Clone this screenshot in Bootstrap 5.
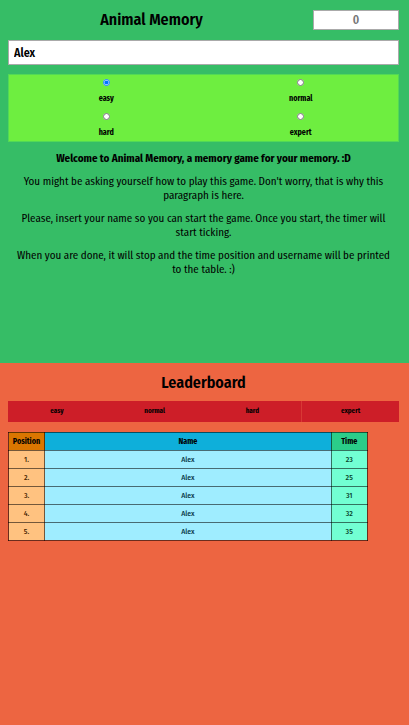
<!DOCTYPE html>
<html lang="en">
<head>
<meta charset="utf-8">
<meta name="viewport" content="width=device-width, initial-scale=1">
<title>Animal Memory</title>
<link href="https://cdn.jsdelivr.net/npm/bootstrap@5.3.0/dist/css/bootstrap.min.css" rel="stylesheet">
<style>
body { font-family: "Fira Sans Condensed", "Roboto Condensed", "Open Sans Condensed", Lato, sans-serif; font-size: 11px; line-height: 14px; color: #000; }
.game { background: #36bd66; padding: 10px 10px 10px 8px; flex: 1 1 0; }
.scores { background: #ed6541; padding: 10px 10px 10px 8px; flex: 1 1 0; }
.title { font-size: 16px; line-height: 20px; font-weight: 600; }
.timer { width: 22%; height: 20px; margin-left: 18px; font-size: 12px; line-height: 16px; font-weight: 600; }
.field { border: 1px solid #aaa; border-radius: 0; background: #fff; color: #000; }
.timer:disabled { color: #777; background: #fff; }
.player { height: 25px; font-size: 12px; font-weight: 600; padding: 0 5px; margin: 10px 0 9px; }
.levels { background: #6eee40; border: 1px solid #52d955; font-size: 8px; font-weight: 700; padding: 4px 0 0; row-gap: 6px; margin-bottom: 10px; }
.levels input { width: 7px; height: 7px; margin: 0 0 8px; }
.levels label { line-height: 10px; }
.level { height: 28px; }
.intro { gap: 9px; padding: 0 4px; }
.tabs { background: #cd1e28; margin: 8px 0 10px; }
.tab { height: 21px; font-size: 7px; line-height: 20px; font-weight: 700; background: #cd1e28; border: 0; color: #000; padding: 0; }
.tab:last-child { border-left: 1px solid #d83935; }
.ranks { width: 92%; font-size: 8px; line-height: 17px; border-collapse: collapse; table-layout: fixed; }
.ranks th, .ranks td { border: 1px solid rgba(0, 0, 0, .55); padding: 0; height: 18px; }
.ranks th { font-weight: 700; }
.ranks td { font-family: "Fira Sans", "Fira Sans Condensed", Lato, sans-serif; font-size: 7px; font-weight: 500; }
.ranks col.edge { width: 36px; }
.ranks th:nth-child(1) { background: #da7600; }
.ranks th:nth-child(2) { background: #0eafda; }
.ranks th:nth-child(3) { background: #2bcd89; }
.ranks td:nth-child(1) { background: #ffc280; color: #442200; }
.ranks td:nth-child(2) { background: #9fedff; color: #083848; }
.ranks td:nth-child(3) { background: #72ffd3; color: #064028; }
</style>
<script src="https://cdn.jsdelivr.net/npm/bootstrap@5.3.0/dist/js/bootstrap.bundle.min.js"></script>
</head>
<body>
<main class="d-flex flex-column min-vh-100">
  <section class="game text-center">
    <header class="d-flex align-items-center">
      <h1 class="title flex-grow-1 m-0">Animal Memory</h1>
      <input class="timer field text-center" type="text" aria-label="Timer" value="0" disabled>
    </header>
    <input class="player field w-100 d-block" type="text" aria-label="Name" value="Alex">
    <div class="levels row g-0" role="radiogroup" aria-label="Difficulty">
      <div class="level col-6 d-flex flex-column align-items-center"><input type="radio" name="level" id="easy" checked><label for="easy">easy</label></div>
      <div class="level col-6 d-flex flex-column align-items-center"><input type="radio" name="level" id="normal"><label for="normal">normal</label></div>
      <div class="level col-6 d-flex flex-column align-items-center"><input type="radio" name="level" id="hard"><label for="hard">hard</label></div>
      <div class="level col-6 d-flex flex-column align-items-center"><input type="radio" name="level" id="expert"><label for="expert">expert</label></div>
    </div>
    <div class="intro d-flex flex-column">
      <p class="m-0 fw-bold">Welcome to Animal Memory, a memory game for your memory. :D</p>
      <p class="m-0">You might be asking yourself how to play this game. Don't worry, that is why this paragraph is here.</p>
      <p class="m-0">Please, insert your name so you can start the game. Once you start, the timer will start ticking.</p>
      <p class="m-0">When you are done, it will stop and the time position and username will be printed to the table. :)</p>
    </div>
  </section>
  <section class="scores text-center">
    <h2 class="title m-0">Leaderboard</h2>
    <div class="tabs d-flex">
      <button class="tab col-3" type="button">easy</button>
      <button class="tab col-3" type="button">normal</button>
      <button class="tab col-3" type="button">hard</button>
      <button class="tab col-3" type="button">expert</button>
    </div>
    <table class="ranks">
      <colgroup><col class="edge"><col><col class="edge"></colgroup>
      <thead><tr><th scope="col">Position</th><th scope="col">Name</th><th scope="col">Time</th></tr></thead>
      <tbody>
        <tr><td>1.</td><td>Alex</td><td>23</td></tr>
        <tr><td>2.</td><td>Alex</td><td>25</td></tr>
        <tr><td>3.</td><td>Alex</td><td>31</td></tr>
        <tr><td>4.</td><td>Alex</td><td>32</td></tr>
        <tr><td>5.</td><td>Alex</td><td>35</td></tr>
      </tbody>
    </table>
  </section>
</main>
</body>
</html>
